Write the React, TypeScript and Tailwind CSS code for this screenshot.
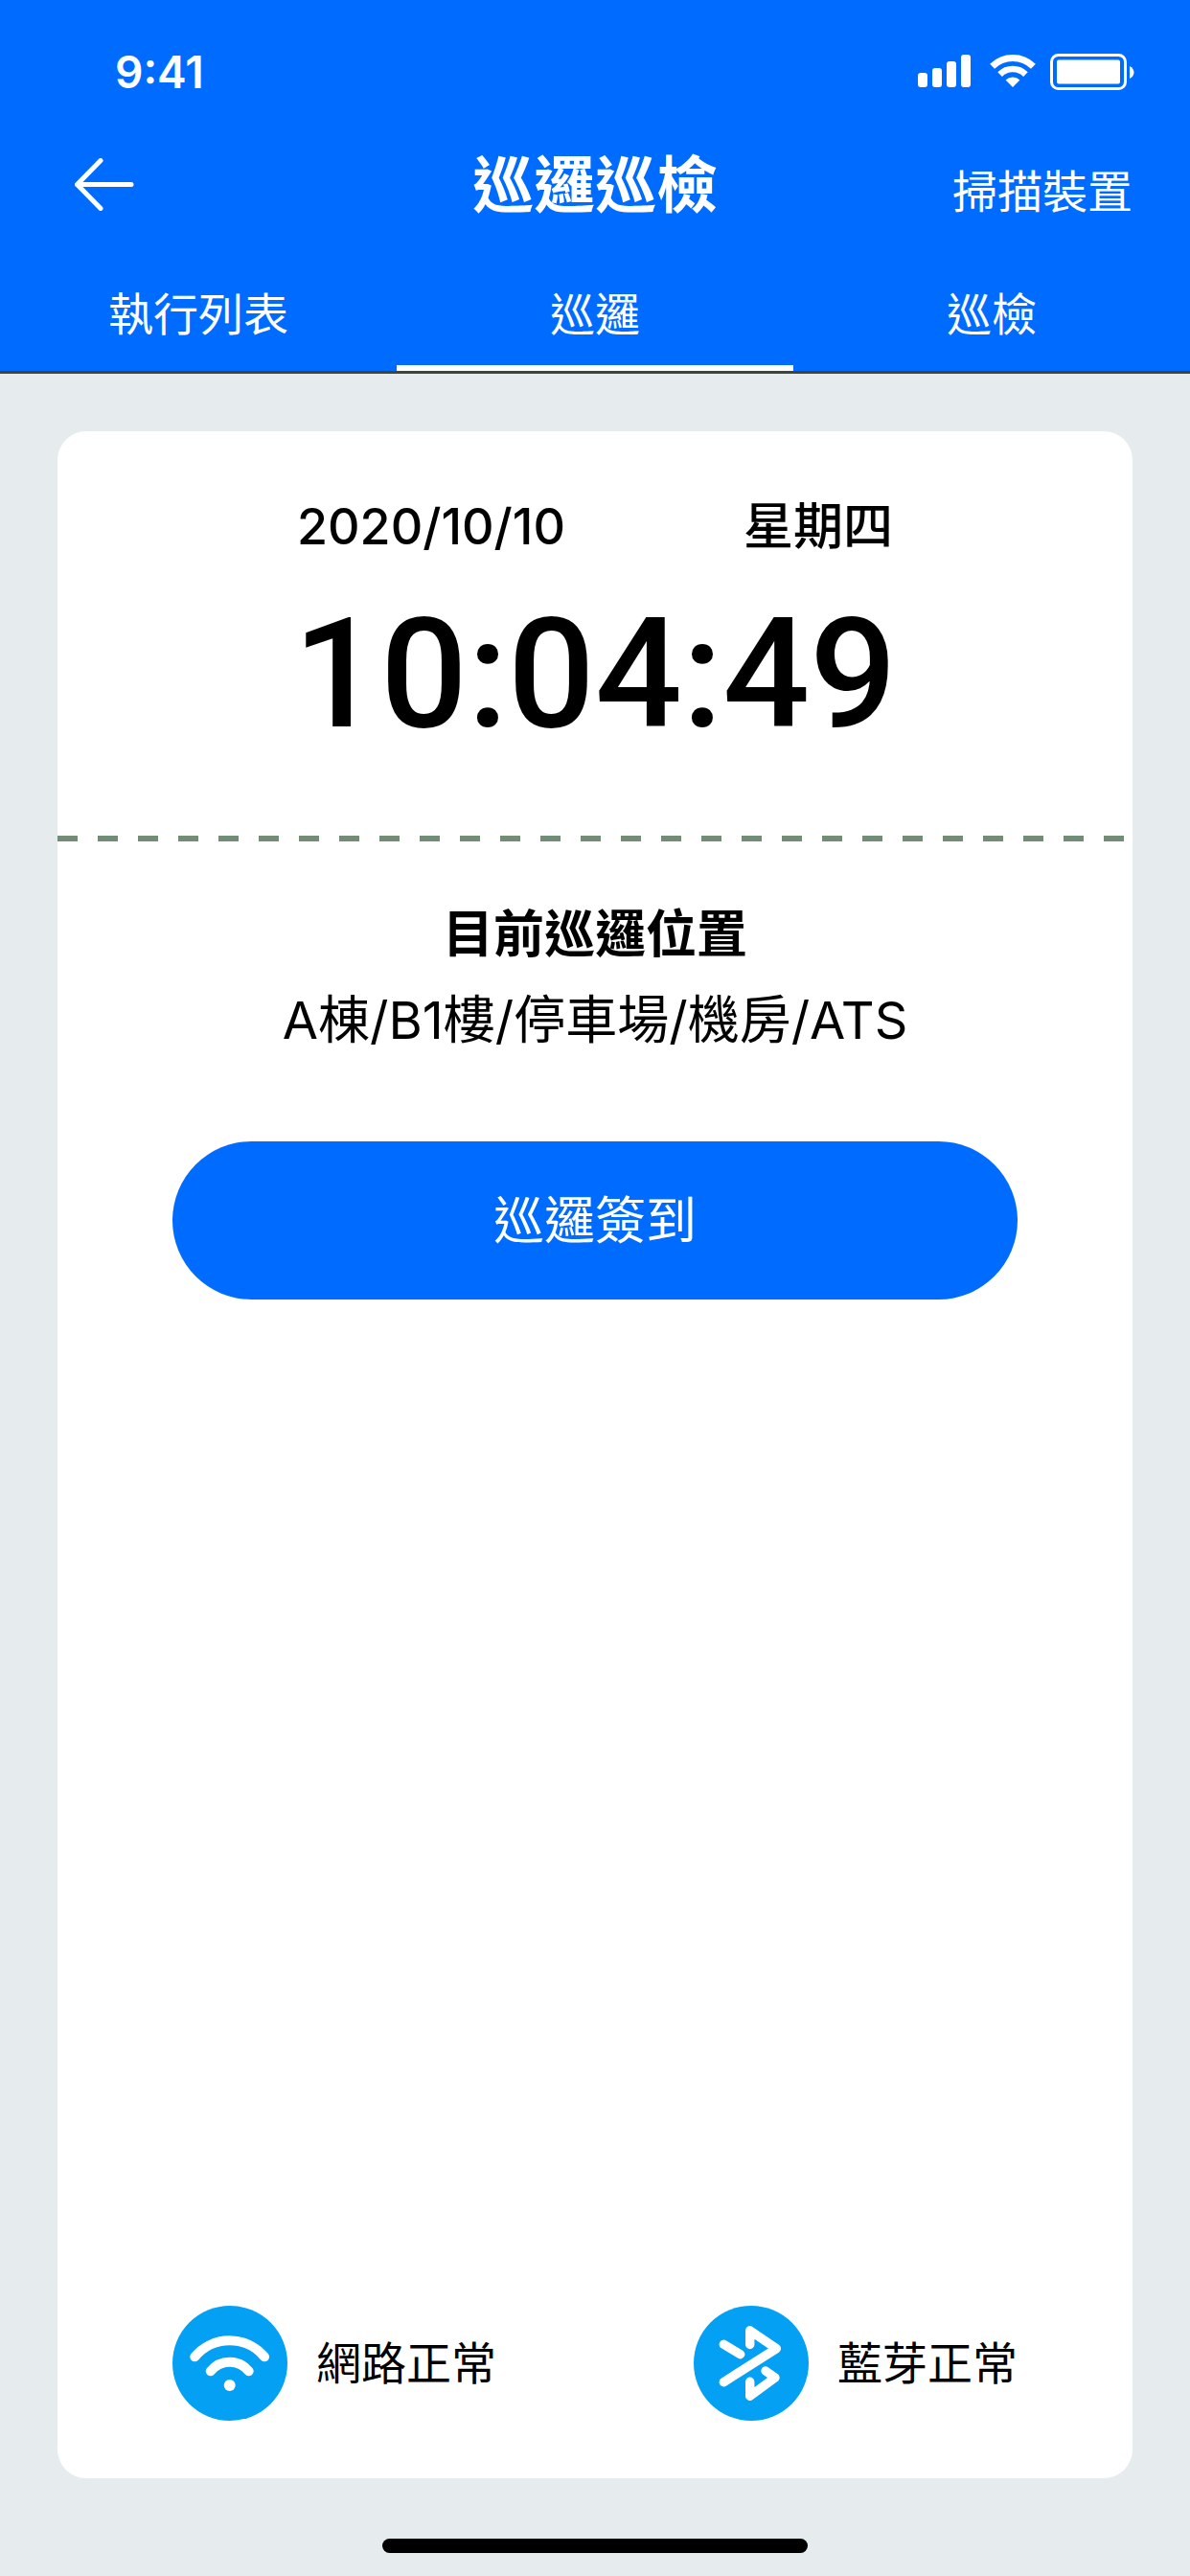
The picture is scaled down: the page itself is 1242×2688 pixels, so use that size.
import type { ReactNode } from "react";

const cjk = "font-['Inter','Noto_Sans_CJK_TC',sans-serif]";

function StatusIcons() {
  return (
    <svg viewBox="0 0 226 38" className="h-[38px] w-[226px]" fill="white" aria-hidden="true">
      <rect x="0" y="20" width="10" height="15" rx="3" />
      <rect x="15" y="15" width="10" height="20" rx="3" />
      <rect x="30" y="8" width="10" height="27" rx="3" />
      <rect x="45" y="1" width="10" height="34" rx="3" />
      <g fill="none" stroke="white">
        <path d="M77.6 13.2A30.5 30.5 0 0 1 120.4 13.2" strokeWidth="7" />
        <path d="M85.6 21.6A19 19 0 0 1 112.4 21.6" strokeWidth="6.6" />
      </g>
      <path d="M99 35L91.6 27.4A10.6 10.6 0 0 1 106.4 27.4Z" />
      <rect x="139.5" y="1.5" width="77" height="35" rx="7" fill="none" stroke="white" strokeWidth="3" />
      <rect x="145" y="6.5" width="66" height="25" rx="2" />
      <path d="M221 13C227 16 227 23 221 26Z" />
    </svg>
  );
}

function BackArrow() {
  return (
    <svg
      viewBox="0 0 62 55"
      className="h-[55px] w-[62px]"
      fill="none"
      stroke="white"
      strokeWidth="5"
      strokeLinecap="round"
      strokeLinejoin="round"
      aria-hidden="true"
    >
      <path d="M27 2.5L2.5 27.5L27 52.5M2.5 27.5H59" />
    </svg>
  );
}

function WifiBadge() {
  return (
    <svg viewBox="0 0 120 120" className="size-[120px]" aria-hidden="true">
      <circle cx="60" cy="60" r="60" fill="#03a0f3" />
      <g fill="none" stroke="white" strokeWidth="10" strokeLinecap="round">
        <path d="M23.3 53.3A47.3 47.3 0 0 1 96 53.3" />
        <path d="M39.7 68.3A25.6 25.6 0 0 1 79.7 68.3" />
      </g>
      <circle cx="59.7" cy="83" r="6" fill="white" />
    </svg>
  );
}

function BluetoothBadge() {
  return (
    <svg viewBox="0 0 120 120" className="size-[120px]" aria-hidden="true">
      <circle cx="60" cy="60" r="60" fill="#03a0f3" />
      <g fill="none" stroke="white" strokeWidth="9.4" strokeLinecap="round" strokeLinejoin="round">
        <path d="M31.3 40.3L48.7 50.7" />
        <path d="M58.7 40.5V25.8L86.3 44.7L31.3 79.7" />
        <path d="M75 68L85 75L58.7 94.3V79.3" />
      </g>
    </svg>
  );
}

function Status({ icon, label }: { icon: ReactNode; label: string }) {
  return (
    <div className="flex items-center gap-[30px]">
      {icon}
      <span className="text-[47px] leading-[56px] text-black">{label}</span>
    </div>
  );
}

const tabs = ["執行列表", "巡邏", "巡檢"];

export default function App() {
  return (
    <div className={`flex min-h-screen flex-col bg-[#e6ecee] font-normal ${cjk}`}>
      <header className="border-b-[3px] border-[#3c4739] bg-[#006cff] text-white">
        <div className="flex h-[150px] items-center justify-between pr-[58px] pl-[120px]">
          <time className="text-[46px] leading-[56px] font-semibold">9:41</time>
          <StatusIcons />
        </div>
        <div className="grid h-[120px] grid-cols-[1fr_auto_1fr] items-start px-[60px]">
          <button type="button" aria-label="返回" className="mt-[15px] ml-[18px] justify-self-start">
            <BackArrow />
          </button>
          <h1 className="text-[64px] leading-[86px] font-bold">巡邏巡檢</h1>
          <button type="button" className="mt-[22px] justify-self-end text-[47px] leading-[56px]">
            掃描裝置
          </button>
        </div>
        <nav className="grid h-[117px] grid-cols-3">
          {tabs.map((t, i) => (
            <a
              key={t}
              href="#"
              aria-current={i === 1 ? "page" : undefined}
              className={`flex items-center justify-center border-b-[6px] pt-1 text-[47px] leading-[56px] ${
                i === 1 ? "border-white" : "border-transparent"
              }`}
            >
              {t}
            </a>
          ))}
        </nav>
      </header>

      <main className="flex flex-1 flex-col px-[60px] pt-[60px]">
        <section className="flex flex-1 flex-col rounded-[30px] bg-white text-black">
          <div className="mx-auto mt-[66px] flex w-[622px] items-center justify-between text-[52px] leading-[68px] font-medium">
            <span>2020/10/10</span>
            <span>星期四</span>
          </div>
          <time className="mt-10 text-center font-['Roboto',sans-serif] text-[160px] leading-[160px] font-medium">
            10:04:49
          </time>
          <div className="mt-[88px] h-[6px] bg-[repeating-linear-gradient(90deg,#738c76_0_21px,transparent_21px_42px)]" />
          <h2 className="mt-[62px] text-center text-[53px] leading-[70px] font-bold">目前巡邏位置</h2>
          <p className="mt-5 text-center text-[54px] leading-[70px]">A棟/B1樓/停車場/機房/ATS</p>
          <button
            type="button"
            className="mx-[120px] mt-[91px] h-[165px] rounded-full bg-[#006cff] text-[53px] leading-[70px] text-white"
          >
            巡邏簽到
          </button>
          <div className="mx-[120px] mt-auto mb-[60px] flex items-center justify-between">
            <Status icon={<WifiBadge />} label="網路正常" />
            <Status icon={<BluetoothBadge />} label="藍芽正常" />
          </div>
        </section>
      </main>

      <footer className="flex justify-center pt-[63px] pb-6">
        <div className="h-[15px] w-[444px] rounded-full bg-black" />
      </footer>
    </div>
  );
}
